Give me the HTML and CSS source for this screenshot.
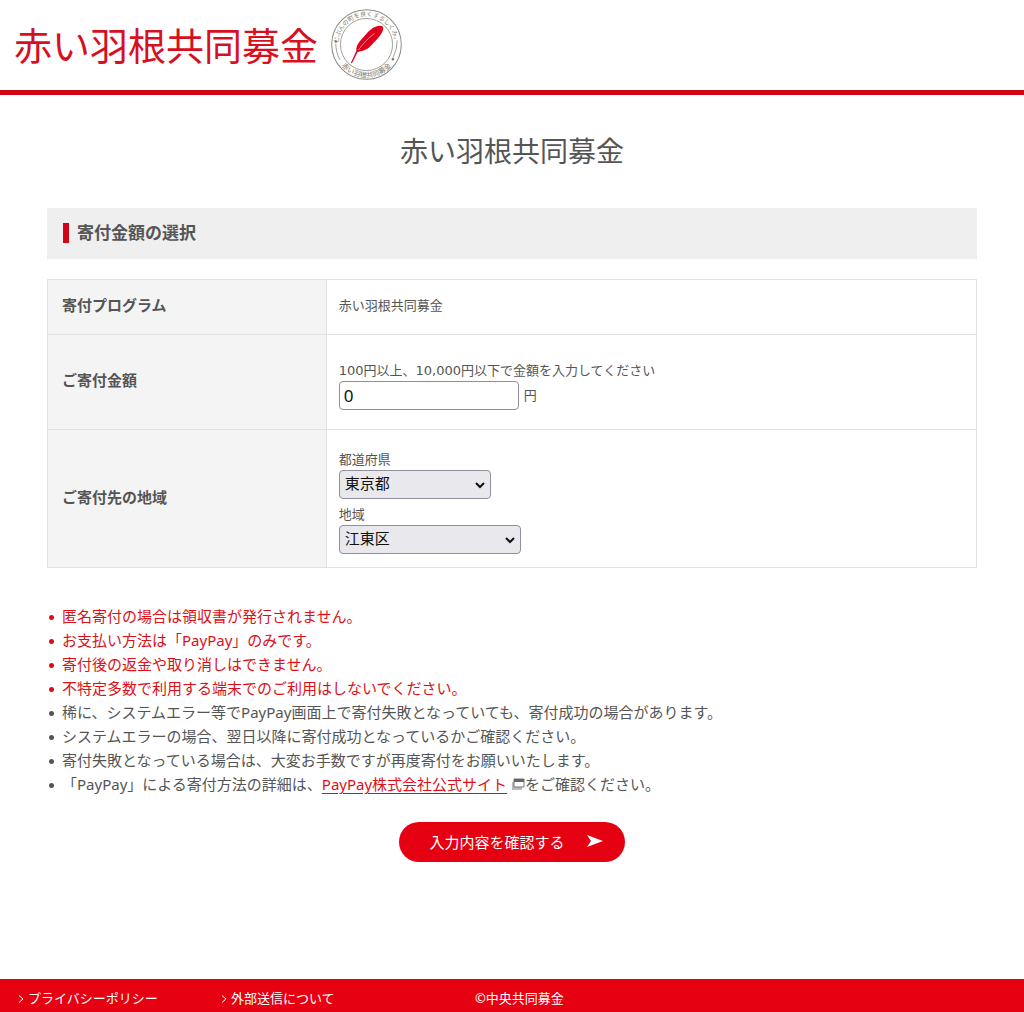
FILE: index.html
```html
<!DOCTYPE html>
<html lang="ja">
<head>
    <meta charset="UTF-8">
    <meta name="viewport" content="width=device-width, initial-scale=1.0">
    <title>赤い羽根共同募金</title>
    <link rel="stylesheet" href="styles.css">
</head>
<body>
    <header class="header">
        <a class="logo" href="#">
            <span class="logo-text">赤い羽根共同募金</span>
            <svg class="emblem" viewBox="0 0 70 70" aria-hidden="true">
                <defs>
                    <path id="arcTop" d="M7.2 35a27.8 27.8 0 0 1 55.6 0"/>
                    <path id="arcBottom" d="M2.5 35a32.5 32.5 0 0 0 65 0"/>
                </defs>
                <circle cx="35" cy="35" r="34.3" fill="none" stroke="#8c8c84" stroke-width="1"/>
                <circle cx="35" cy="35" r="25.7" fill="none" stroke="#8c8c84" stroke-width="0.8"/>
                <text class="emblem-text" text-anchor="middle"><textPath href="#arcTop" startOffset="50%">じぶんの町を良くするしくみ。</textPath></text>
                <text class="emblem-text emblem-name" text-anchor="middle"><textPath href="#arcBottom" startOffset="50%">赤い羽根共同募金</textPath></text>
                <path d="M4.7 34q0 9 4.2 16M65.3 31q0 9-4.2 17" fill="none" stroke="#8c8c84" stroke-width="0.8"/>
                <circle cx="4.8" cy="32" r="1.2" fill="#77776f"/>
                <circle cx="61" cy="49.5" r="1.2" fill="#77776f"/>
                <path d="M51.2 17.2C46 15 39 19.500 34 25.500C29 31.500 24.500 35 25 41.500L19.500 53.200L20.600 53.600L26.300 42.300C32 41.500 36 40 40 35.500C46 29 53 22.500 51.200 17.200z" fill="#e0001b"/>
                <path d="M27 40.500c5-7.200 9.500-11.500 16-16.500" fill="none" stroke="#fff" stroke-width="0.5"/>
            </svg>
        </a>
    </header>

    <main class="container">
        <h1>赤い羽根共同募金</h1>

        <h2>寄付金額の選択</h2>

        <form id="donationForm">
            <table>
                <tbody>
                    <tr>
                        <th scope="row">寄付プログラム</th>
                        <td>赤い羽根共同募金</td>
                    </tr>
                    <tr class="row-amount">
                        <th scope="row">ご寄付金額</th>
                        <td>
                            <label for="amount">100円以上、10,000円以下で金額を入力してください</label>
                            <div class="amount">
                                <input type="text" id="amount" value="0" inputmode="numeric">
                                <span>円</span>
                            </div>
                        </td>
                    </tr>
                    <tr class="row-area">
                        <th scope="row">ご寄付先の地域</th>
                        <td>
                            <label for="pref">都道府県</label>
                            <div class="select-box select-pref">
                                <select id="pref">
                                    <option>東京都</option>
                                </select>
                                <svg class="chevron" viewBox="0 0 10 7" aria-hidden="true"><path d="M1 1l4 4 4-4"/></svg>
                            </div>
                            <label for="city">地域</label>
                            <div class="select-box select-city">
                                <select id="city">
                                    <option>江東区</option>
                                </select>
                                <svg class="chevron" viewBox="0 0 10 7" aria-hidden="true"><path d="M1 1l4 4 4-4"/></svg>
                            </div>
                        </td>
                    </tr>
                </tbody>
            </table>

            <ul class="notes">
                <li class="important">匿名寄付の場合は領収書が発行されません。</li>
                <li class="important">お支払い方法は「PayPay」のみです。</li>
                <li class="important">寄付後の返金や取り消しはできません。</li>
                <li class="important">不特定多数で利用する端末でのご利用はしないでください。</li>
                <li>稀に、システムエラー等でPayPay画面上で寄付失敗となっていても、寄付成功の場合があります。</li>
                <li>システムエラーの場合、翌日以降に寄付成功となっているかご確認ください。</li>
                <li>寄付失敗となっている場合は、大変お手数ですが再度寄付をお願いいたします。</li>
                <li>「PayPay」による寄付方法の詳細は、<a href="#">PayPay株式会社公式サイト</a> <svg class="blank-icon" viewBox="0 0 14 12" aria-hidden="true"><path d="M1 4h10v8H1z" fill="#bbb"/><path d="M3 1h10v8H3z" fill="#fff" stroke="#777" stroke-width="1"/><path d="M3 1h10v3H3z" fill="#666"/></svg>をご確認ください。</li>
            </ul>

            <button type="submit" class="submit-btn">
                入力内容を確認する
                <svg class="arrow" viewBox="0 0 16 12" aria-hidden="true"><path d="M0 0l16 6-16 6 4-6z"/></svg>
            </button>
        </form>
    </main>

    <footer class="footer">
        <a href="#"><svg class="footer-mark" viewBox="0 0 6 8" aria-hidden="true"><path d="M1 0.5l4 3.5-4 3.5"/></svg>プライバシーポリシー</a>
        <a href="#"><svg class="footer-mark" viewBox="0 0 6 8" aria-hidden="true"><path d="M1 0.5l4 3.5-4 3.5"/></svg>外部送信について</a>
        <small>©中央共同募金</small>
    </footer>
</body>
</html>
```
FILE: styles.css
```css
* {
    box-sizing: border-box;
}

body {
    display: flex;
    flex-direction: column;
    min-height: 100vh;
    margin: 0;
    background: #fff;
    color: #555;
    font-family: "Noto Sans", "Noto Sans CJK JP", sans-serif;
    font-size: 13px;
    line-height: 20px;
}

/* header */
.header {
    padding: 9px 14px 10px;
    border-bottom: 5px solid #ce0615;
}

.logo {
    display: flex;
    align-items: center;
    gap: 13px;
    color: #d7101f;
    text-decoration: none;
}

.logo-text {
    font-size: 38px;
    line-height: 40px;
}

.emblem {
    width: 71px;
    height: 71px;
}

.emblem-text {
    fill: #77776f;
    font-size: 6px;
}

.emblem-name {
    font-size: 7px;
}

/* main */
.container {
    padding: 0 47px;
}

h1 {
    margin: 36px 0;
    font-size: 28px;
    font-weight: normal;
    line-height: 41px;
    text-align: center;
}

h2 {
    display: flex;
    align-items: center;
    gap: 8px;
    margin: 0 0 20px;
    padding: 13px 16px 14px;
    background: #efefef;
    font-size: 17px;
    line-height: 24px;
}

h2::before {
    content: "";
    width: 6px;
    height: 20px;
    background: #ce0615;
}

table {
    width: 100%;
    border-collapse: collapse;
}

th, td {
    height: 55px;
    padding: 0 12px 4px;
    border: 1px solid #e2e2e2;
    text-align: left;
}

th {
    width: 30%;
    padding-left: 14px;
    background: #f4f4f4;
    font-size: 15px;
}

.row-amount td {
    height: 95px;
    padding-top: 10px;
}

.row-area td {
    height: 138px;
    padding-top: 10px;
}

label {
    display: block;
    font-family: "DejaVu Sans", "Noto Sans CJK JP", sans-serif;
}

.amount {
    display: flex;
    align-items: center;
    gap: 5px;
}

input, select {
    height: 29px;
    border: 1px solid #8f8f9d;
    border-radius: 4px;
    color: #111;
    font-family: inherit;
    font-size: 15px;
}

input {
    width: 180px;
    padding: 0 4px;
    font-size: 17px;
}

.select-box {
    position: relative;
}

.select-box + label {
    margin-top: 6px;
}

.select-pref {
    width: 152px;
}

.select-city {
    width: 182px;
}

select {
    display: block;
    width: 100%;
    padding: 0 24px 2px 5px;
    background: #e9e9ed;
    appearance: none;
}

.chevron {
    position: absolute;
    top: 12px;
    right: 6px;
    width: 10px;
    height: 7px;
    fill: none;
    stroke: #111;
    stroke-width: 2;
    pointer-events: none;
}

.notes {
    margin: 36px 0 26px;
    padding-left: 15px;
    font-size: 15px;
    line-height: 24px;
    list-style: none;
}

.notes li::before {
    content: "";
    float: left;
    width: 5px;
    height: 5px;
    margin: 11px 0 0 -13px;
    border-radius: 50%;
    background: currentColor;
}

.notes .important,
.notes a {
    color: #dc0f17;
}

.notes a {
    text-underline-offset: 3px;
}

.blank-icon {
    width: 14px;
    height: 12px;
}

.submit-btn {
    display: flex;
    align-items: center;
    gap: 22px;
    height: 40px;
    margin: 0 auto 40px;
    padding: 0 22px 2px 30px;
    border: none;
    border-radius: 20px;
    background: #e50012;
    color: #fff;
    font-family: inherit;
    font-size: 15px;
    cursor: pointer;
}

.arrow {
    width: 16px;
    height: 12px;
    fill: #fff;
}

/* footer */
.footer {
    display: grid;
    grid-template-columns: 203px 254px 1fr;
    margin-top: auto;
    padding: 9px 18px 4px;
    background: #e50012;
    color: #fff;
}

.footer a {
    color: inherit;
    text-decoration: none;
}

.footer small {
    font-size: 13px;
}

.footer-mark {
    width: 6px;
    height: 8px;
    margin-right: 4px;
    fill: none;
    stroke: #fff;
    stroke-width: 1;
}
```
